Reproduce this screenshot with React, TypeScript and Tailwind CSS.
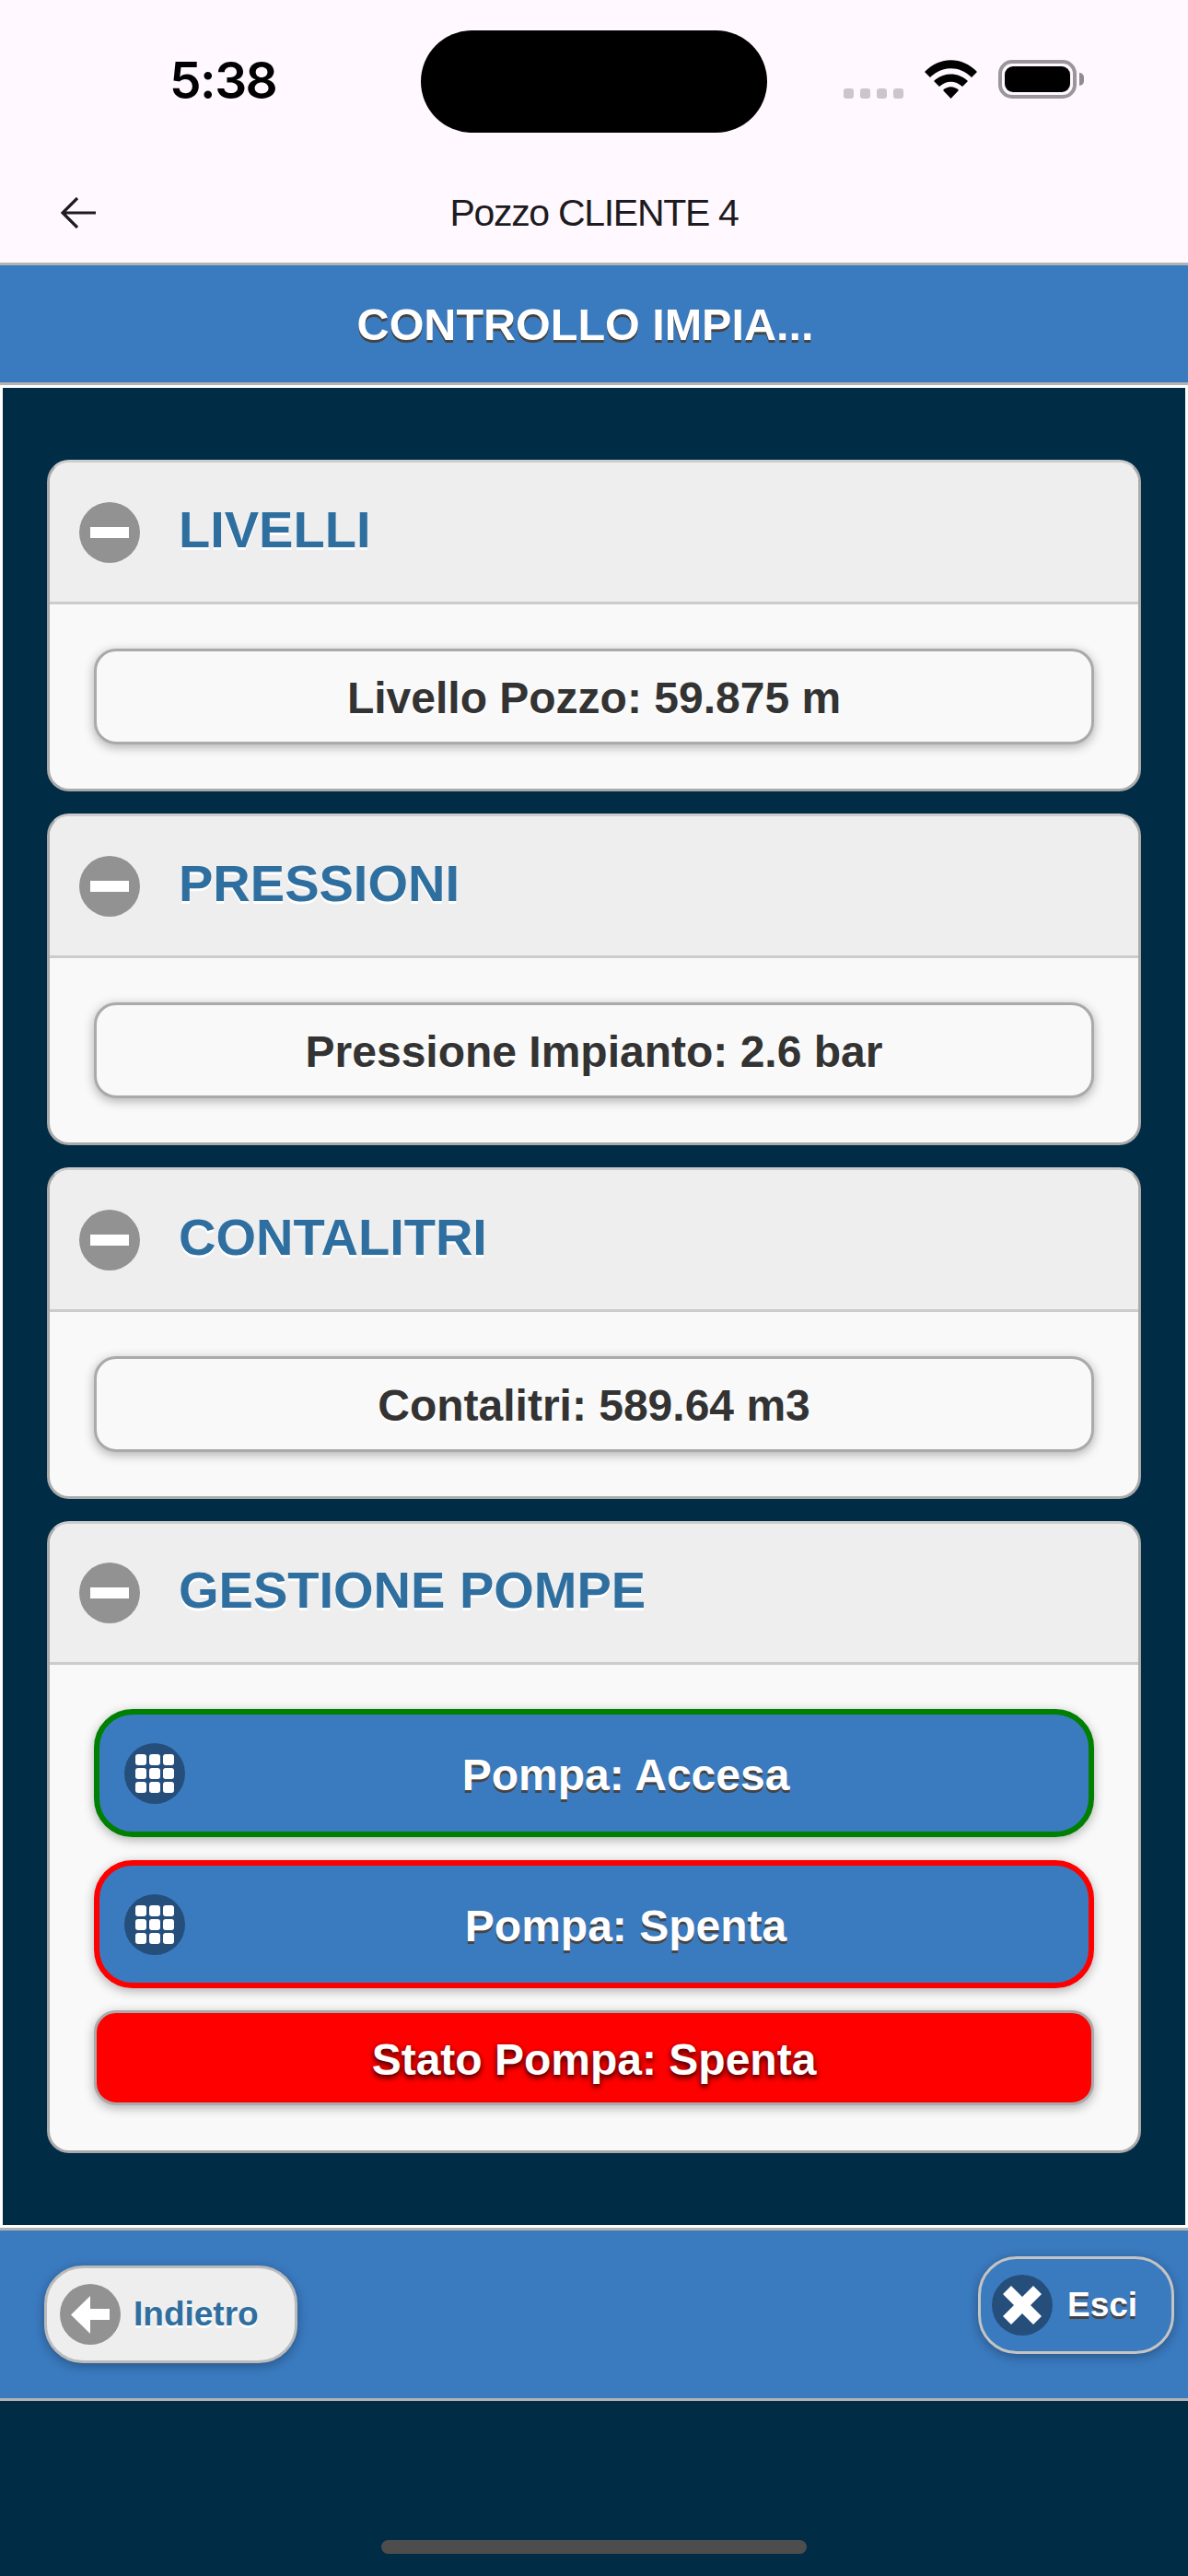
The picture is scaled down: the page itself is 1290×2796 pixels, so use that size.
import React from 'react';

const FONT = "font-['Liberation_Sans',Arial,sans-serif]";

const Sezione: React.FC<{ titolo: string; ultima?: boolean; children: React.ReactNode }> = ({ titolo, ultima, children }) => (
  <div className="rounded-[24px] border-[3px] border-[#aaa] border-t-[#ccc] bg-[#f9f9f9] overflow-hidden">
    <div className={`${ultima ? 'h-[153px]' : 'h-[154px]'} flex items-center pl-[32px] bg-[#eee] border-b-[3px] border-[#ccc]`}>
      <span className="w-[66px] h-[66px] rounded-full bg-[#929292] flex items-center justify-center">
        <span className="block w-[42px] h-[12px] bg-white" />
      </span>
      <h3 className="ml-[42px] mb-[6px] text-[56px] leading-none font-bold text-[#2f6fa0] [text-shadow:0_3px_0_#fff]">{titolo}</h3>
    </div>
    <div className={`px-[48px] pt-[48px] ${ultima ? 'pb-[49px]' : 'pb-[48px]'} flex flex-col`}>{children}</div>
  </div>
);

const Valore: React.FC<{ testo: string }> = ({ testo }) => (
  <div className="h-[104px] pt-[4px] rounded-[24px] border-[3px] border-[#aaa] bg-[#f9f9f9] shadow-[0_3px_12px_rgba(0,0,0,0.3)] flex items-center justify-center text-[48px] font-bold text-[#333] [text-shadow:0_3px_0_#fff]">
    {testo}
  </div>
);

const GridIcon = () => (
  <span className="w-[66px] h-[66px] rounded-full bg-[#254e7b] grid grid-cols-[12px_12px_12px] grid-rows-[12px_12px_12px] gap-[3px] content-center justify-center">
    {[0, 1, 2, 3, 4, 5, 6, 7, 8].map((i) => (
      <span key={i} className="rounded-[3px] bg-white" />
    ))}
  </span>
);

const Pompa: React.FC<{ testo: string; bordo: string }> = ({ testo, bordo }) => (
  <div className={`relative h-[139px] rounded-[42px] border-[6px] ${bordo} bg-[#3a7abf] shadow-[0_3px_12px_rgba(0,0,0,0.3)] flex items-center pl-[27px]`}>
    <GridIcon />
    <span className="flex-1 text-center pt-[4px] pr-[24px] text-[48px] font-bold text-white [text-shadow:0_3px_0_#444]">{testo}</span>
  </div>
);

export default function App() {
  return (
    <div className={`${FONT} w-[1290px] h-[2796px] relative bg-[#012c46] flex flex-col`}>
      {/* status bar + app bar */}
      <div className="h-[285px] bg-[#fff8ff] flex flex-col">
        <div className="h-[177px] flex items-start">
          <span className="ml-[184px] mt-[60px] w-[116px] text-[55px] leading-none font-semibold text-black font-['Inter',sans-serif] tracking-[-1.5px] whitespace-nowrap">5:38</span>
          <span className="ml-[157px] mt-[33px] w-[376px] h-[111px] rounded-[56px] bg-black" />
          <div className="ml-[83px] mt-[65px] h-[42px] flex items-end">
            <div className="flex gap-[7px]">
              {[0, 1, 2, 3].map((i) => (
                <span key={i} className="w-[11px] h-[11px] rounded-[3px] bg-[#cbc6cb]" />
              ))}
            </div>
            <svg className="ml-[23px]" width="57" height="42" viewBox="0 0 57 42">
              <path d="M0 13 C16 -4 41 -4 57 13 L51 19 C38 6 19 6 6 19 Z" fill="#000" />
              <path d="M10 23 C20 13 37 13 47 23 L41 29 C33 22 24 22 16 29 Z" fill="#000" />
              <path d="M20 33 C25 28 32 28 37 33 L28.5 42 Z" fill="#000" />
            </svg>
            <div className="ml-[23px] w-[85px] h-[42px] rounded-[15px] border-[4px] border-[#9a969a] p-[3px]">
              <div className="w-full h-full rounded-[9px] bg-black" />
            </div>
            <span className="ml-[3px] mb-[14px] w-[5px] h-[14px] rounded-r-[5px] bg-[#8f8b8f]" />
          </div>
        </div>
        <div className="relative flex-1 flex items-start justify-center">
          <svg className="absolute left-[66px] top-[37px]" width="38" height="34" viewBox="0 0 38 34" fill="none" stroke="#1d1b20" strokeWidth="3.2">
            <path d="M38 17 H2 M18 1 L2 17 L18 33" />
          </svg>
          <span className="mt-[30px] text-[41px] leading-[48px] tracking-[-1.3px] text-[#1d1b20]">Pozzo CLIENTE 4</span>
        </div>
      </div>

      {/* header */}
      <div className="h-[133px] pt-[2px] pr-[19px] bg-[#3a7abf] border-y-[3px] border-[#b3b3b3] flex items-center justify-center">
        <h1 className="text-[48.5px] font-bold text-white [text-shadow:0_3px_0_#444]">CONTROLLO IMPIA...</h1>
      </div>

      {/* contenuto */}
      <div className="h-[2000px] border-[3px] border-white bg-[#012c46] px-[48px] pt-[78px]">
        <div className="flex flex-col gap-[24px]">
          <Sezione titolo="LIVELLI"><Valore testo="Livello Pozzo: 59.875 m" /></Sezione>
          <Sezione titolo="PRESSIONI"><Valore testo="Pressione Impianto: 2.6 bar" /></Sezione>
          <Sezione titolo="CONTALITRI"><Valore testo="Contalitri: 589.64 m3" /></Sezione>
          <Sezione titolo="GESTIONE POMPE" ultima>
            <div className="flex flex-col gap-[25px]">
              <Pompa testo="Pompa: Accesa" bordo="border-[#008000]" />
              <Pompa testo="Pompa: Spenta" bordo="border-[#ff0000]" />
              <div className="h-[103px] -mt-[1px] pt-[4px] rounded-[24px] border-[3px] border-[#aaa] bg-[#ff0000] shadow-[0_3px_12px_rgba(0,0,0,0.3)] flex items-center justify-center text-[48px] font-bold text-white [text-shadow:0_3px_6px_#200]">
                Stato Pompa: Spenta
              </div>
            </div>
          </Sezione>
        </div>
      </div>

      {/* footer */}
      <div className="relative h-[188px] bg-[#3a7abf] border-y-[3px] border-[#b3b3b3]">
        <button className="absolute left-[48px] top-[38px] w-[275px] h-[106px] rounded-[42px] border-[3px] border-[#bbb] bg-[#eee] shadow-[0_3px_12px_rgba(0,0,0,0.3)] flex items-center pl-[14px]">
          <span className="w-[66px] h-[66px] rounded-full bg-[#929292] flex items-center justify-center">
            <svg width="42" height="41" viewBox="0 0 42 41"><path d="M21 0 V14 H42 V26 H21 V41 L0 20.5 Z" fill="#fff" /></svg>
          </span>
          <span className="ml-[14px] text-[37px] font-bold text-[#2f6fa0] [text-shadow:0_3px_0_#fff]">Indietro</span>
        </button>
        <button className="absolute left-[1062px] top-[28px] w-[213px] h-[106px] rounded-[42px] border-[3px] border-[#c4c4c4] bg-[#3a7abf] shadow-[0_3px_12px_rgba(0,0,0,0.3)] flex items-center pl-[12px]">
          <span className="w-[66px] h-[66px] rounded-full bg-[#254e7b] flex items-center justify-center">
            <svg width="42" height="42" viewBox="0 0 42 42"><path d="M9 0 L21 12 L33 0 L42 9 L30 21 L42 33 L33 42 L21 30 L9 42 L0 33 L12 21 L0 9 Z" fill="#fff" /></svg>
          </span>
          <span className="ml-[16px] text-[37px] font-bold text-white [text-shadow:0_3px_0_#444]">Esci</span>
        </button>
      </div>

      {/* home indicator */}
      <div className="absolute left-[414px] top-[2757px] w-[462px] h-[15px] rounded-[8px] bg-[#4d4d4d]" />
    </div>
  );
}
